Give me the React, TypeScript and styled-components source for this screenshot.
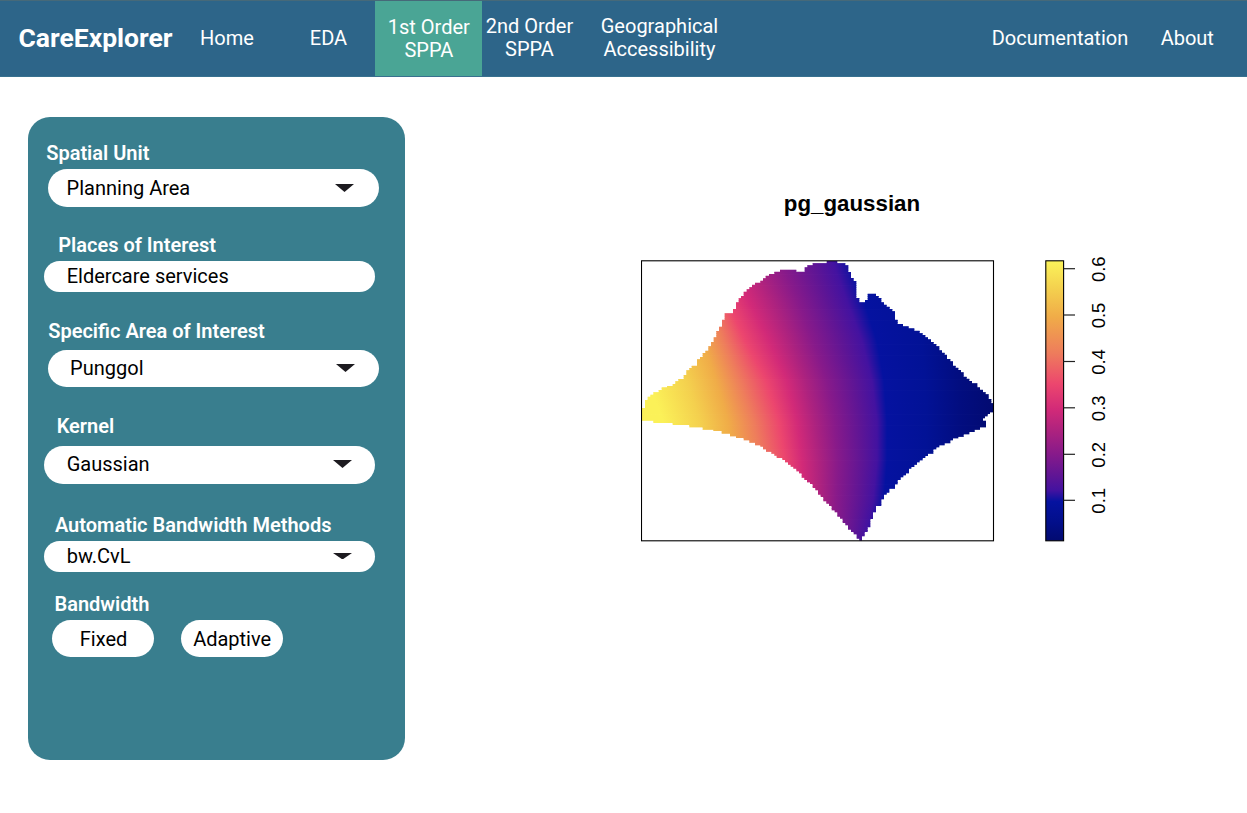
import React from 'react';
import styled, { createGlobalStyle } from 'styled-components';

const GlobalStyle = createGlobalStyle`
  * { box-sizing: border-box; }
  body { margin: 0; background: #fff; font-family: Roboto, sans-serif; }
`;

const Page = styled.div`
  min-height: 813px;
  width: 1247px;
`;

const NavBar = styled.nav`
  display: flex;
  height: 77px;
  background: #2d6589;
  border-top: 1px solid #466979;
  border-bottom: 1px solid #38718f;
  color: #fff;
`;

const Brand = styled.div`
  width: 154px;
  margin-left: 18.5px;
  font-size: 26.5px;
  font-weight: 700;
  line-height: 74px;
  white-space: nowrap;
`;

const NavItem = styled.a<{ $width: number; $gap?: number; $active?: boolean; $lift?: number }>`
  display: flex;
  flex: none;
  align-items: center;
  justify-content: center;
  width: ${p => p.$width}px;
  margin-left: ${p => p.$gap ?? 0}px;
  padding-top: ${p => (p.$active ? 1.6 : 0)}px;
  padding-bottom: ${p => p.$lift ?? 0}px;
  background: ${p => (p.$active ? '#4aa595' : 'transparent')};
  font-size: 20px;
  line-height: 23px;
  text-align: center;
  white-space: pre-line;
`;

const Content = styled.main`
  display: flex;
  padding: 39.7px 0 0 27.5px;
`;

const Panel = styled.aside`
  width: 377px;
  height: 643px;
  padding: 24.3px 0 0 16.7px;
  border-radius: 22px;
  background: #397e8e;
`;

const Field = styled.div<{ $before?: number }>`
  margin-top: ${p => p.$before ?? 0}px;
`;

const Label = styled.div<{ $indent: number; $gap: number }>`
  height: 24px;
  margin: 0 0 ${p => p.$gap}px ${p => p.$indent}px;
  color: #fff;
  font-size: 20px;
  font-weight: 600;
  line-height: 24px;
  white-space: nowrap;
`;

const Select = styled.div<{ $indent?: number; $short?: boolean; $text?: number; $end?: number; $lift?: number }>`
  display: flex;
  align-items: center;
  justify-content: space-between;
  width: 331.3px;
  height: ${p => (p.$short ? 30.5 : 37.3)}px;
  margin-left: ${p => p.$indent ?? 0}px;
  padding: 0 ${p => p.$end ?? 23.5}px ${p => p.$lift ?? 0}px ${p => p.$text ?? 22.5}px;
  border-radius: 19px;
  background: #fff;
  color: #000;
  font-size: 20px;
  line-height: 24px;
`;

const Buttons = styled.div`
  display: flex;
  gap: 27px;
  margin-left: 7.5px;
`;

const Toggle = styled.button<{ $nudge?: number }>`
  width: 102.3px;
  height: 37.3px;
  padding: 0 0 0 ${p => p.$nudge ?? 0}px;
  border: 0;
  border-radius: 19px;
  background: #fff;
  color: #000;
  font: 400 20px/24px Roboto, sans-serif;
`;

const Figure = styled.figure`
  width: 500px;
  margin: 73.3px 0 0 236.5px;
`;

const FigureTitle = styled.figcaption`
  width: 422px;
  height: 60px;
  color: #000;
  font: 700 22.3px/28px "Liberation Sans", Arial, sans-serif;
  text-align: center;
`;

const Drawing = styled.svg`
  display: block;
`;

const Arrow = ({ h = 8 }: { h?: number }) => (
  <Drawing width="19" height={h} viewBox="0 0 19 8" preserveAspectRatio="none">
    <path d="M0 0H19L9.5 8Z" fill="#1d1b20" />
  </Drawing>
);

type Step = [number, number];

// Upper edge of the study area in thirds of a pixel: [x where the step starts, y].
const TOP: Step[] = [
  [36, 474], [45, 450], [53, 440], [61, 434], [70, 427], [86, 420], [95, 412], [111, 408], [128, 402],
  [136, 394], [145, 387], [161, 375], [169, 361], [178, 354], [185, 347], [201, 328], [210, 321],
  [218, 309], [226, 302], [235, 289], [243, 276], [251, 262], [259, 243], [267, 230], [276, 209],
  [284, 190], [309, 177], [318, 157], [326, 145], [333, 138], [341, 125], [350, 118], [358, 112],
  [366, 104], [375, 98], [391, 92], [399, 85], [407, 77], [417, 72], [433, 65], [450, 59], [499, 65],
  [524, 52], [532, 46], [548, 40], [590, 33], [622, 40], [646, 46], [655, 66], [663, 84], [671, 93],
  [679, 144], [688, 157], [705, 150], [713, 131], [738, 138], [746, 144], [754, 157], [762, 164],
  [770, 170], [779, 177], [787, 184], [795, 209], [803, 222], [819, 229], [836, 235], [853, 242],
  [869, 250], [878, 255], [886, 262], [894, 268], [903, 276], [911, 282], [919, 289], [928, 301],
  [936, 308], [944, 314], [951, 327], [961, 334], [969, 347], [977, 353], [985, 360], [993, 367],
  [1001, 380], [1010, 386], [1018, 393], [1026, 400], [1042, 412], [1050, 419], [1059, 427],
  [1067, 433], [1076, 447], [1084, 450],
];

const BOTTOM: Step[] = [
  [36, 512], [70, 519], [128, 525], [178, 532], [218, 539], [250, 543], [275, 551], [300, 559],
  [318, 564], [341, 571], [358, 578], [375, 586], [391, 590], [399, 598], [408, 605], [424, 611],
  [433, 617], [440, 624], [457, 630], [465, 637], [474, 644], [482, 650], [490, 656], [499, 664],
  [507, 670], [515, 683], [523, 690], [531, 697], [540, 702], [548, 714], [556, 721], [564, 734],
  [572, 741], [580, 754], [589, 761], [597, 768], [605, 781], [614, 787], [622, 800], [630, 806],
  [638, 819], [646, 826], [654, 839], [663, 846], [671, 853], [680, 866], [688, 872], [696, 859],
  [704, 846], [713, 832], [721, 807], [729, 787], [738, 768], [754, 748], [762, 734], [770, 728],
  [778, 716], [795, 703], [803, 690], [812, 682], [820, 676], [828, 670], [837, 656], [844, 651],
  [853, 644], [861, 637], [869, 631], [878, 624], [886, 618], [894, 611], [910, 598], [919, 592],
  [928, 586], [944, 580], [961, 571], [969, 565], [985, 560], [1001, 553], [1018, 546], [1034, 539],
  [1050, 532],
];

// Eastern tip with its small inlet, between the upper and the lower edge.
const TIP: Step[] = [
  [1090, 460], [1080, 487], [1073, 492], [1065, 499], [1059, 505], [1068, 512],
];

const px = (x: number) => (x / 3 - 11).toFixed(2);
const py = (y: number) => (y / 3).toFixed(2);

const outline = (() => {
  let d = `M${px(36)} ${py(474)}`;
  TOP.forEach(([x, y]) => { d += `H${px(x)}V${py(y)}`; });
  TIP.forEach(([x, y]) => { d += `V${py(y)}H${px(x)}`; });
  d += `V${py(532)}`;
  for (let i = BOTTOM.length - 1; i >= 0; i--) {
    d += `V${py(BOTTOM[i][1])}H${px(BOTTOM[i][0])}`;
  }
  return d + 'Z';
})();

// Contours of equal density: x at eight heights, from the top edge to the bottom one.
const CONTOUR_Y = [0, 39, 79, 119, 159, 199, 239, 279];
const CONTOURS: { color: string; x: number[] }[] = [
  { color: '#fbf158', x: [-30, -20, -5, 8, 22, 22, 22, 22] },
  { color: '#f4d04e', x: [10, 20, 32, 46, 59, 61, 62, 62] },
  { color: '#f0ac48', x: [40, 50, 62, 75, 87, 92, 93, 93] },
  { color: '#ee7c5c', x: [58, 70, 83, 99, 113, 120, 122, 122] },
  { color: '#ec466e', x: [74, 86, 104, 125, 138, 144, 146, 146] },
  { color: '#d22a78', x: [90, 108, 128, 146, 156, 161, 163, 163] },
  { color: '#ac227f', x: [113, 133, 150, 165, 174, 179, 180, 180] },
  { color: '#871a8a', x: [140, 157, 172, 186, 194, 197, 196, 195] },
  { color: '#5e1595', x: [172, 186, 201, 213, 219, 221, 218, 212] },
  { color: '#4312a0', x: [192, 206, 221, 231, 236, 236, 232, 223] },
  { color: '#0512a0', x: [211, 223, 236, 243, 246, 246, 243, 235] },
  { color: '#021296', x: [270, 276, 281, 284, 285, 285, 282, 278] },
  { color: '#020d80', x: [310, 313, 316, 318, 319, 319, 318, 316] },
  { color: '#020a70', x: [354, 354, 354, 354, 354, 354, 354, 354] },
];

const contourAt = (xs: number[], y: number) => {
  const i = Math.min(6, CONTOUR_Y.findIndex((_, k) => k === 7 || CONTOUR_Y[k + 1] > y));
  const t = (y - CONTOUR_Y[i]) / (CONTOUR_Y[i + 1] - CONTOUR_Y[i]);
  return xs[i] + (xs[i + 1] - xs[i]) * t;
};

const CELL = 280 / 128;
const ROWS = Array.from({ length: 128 }, (_, i) => i);

const TICKS: [string, number][] = [
  ['0.6', 8.7], ['0.5', 55], ['0.4', 101.5], ['0.3', 147.8], ['0.2', 194.3], ['0.1', 240.3],
];

const DensityPlot = () => (
  <Drawing width="500" height="310" viewBox="0 -10 500 310">
    <defs>
      <clipPath id="area"><path d={outline} transform="translate(0 -10)" /></clipPath>
      {ROWS.map(r => (
        <linearGradient key={r} id={`row${r}`} gradientUnits="userSpaceOnUse" x1="-30" x2="370" y1="0" y2="0">
          {CONTOURS.map(c => (
            <stop key={c.color} offset={(contourAt(c.x, r * CELL) + 30) / 400} stopColor={c.color} />
          ))}
        </linearGradient>
      ))}
      <linearGradient id="scale" x1="0" x2="0" y1="0" y2="1">
        <stop offset="0" stopColor="#fbf35a" />
        <stop offset="0.1" stopColor="#f4d04e" />
        <stop offset="0.2" stopColor="#f0ac48" />
        <stop offset="0.33" stopColor="#ee7c5c" />
        <stop offset="0.44" stopColor="#ec466e" />
        <stop offset="0.53" stopColor="#d22a78" />
        <stop offset="0.61" stopColor="#ac227f" />
        <stop offset="0.69" stopColor="#871a8a" />
        <stop offset="0.77" stopColor="#5e1595" />
        <stop offset="0.82" stopColor="#4312a0" />
        <stop offset="0.86" stopColor="#0512a0" />
        <stop offset="0.93" stopColor="#020f8c" />
        <stop offset="1" stopColor="#020a70" />
      </linearGradient>
    </defs>
    <g clipPath="url(#area)">
      {ROWS.map(r => (
        <rect key={r} x="0" y={1 + r * CELL} width="354" height={CELL + 0.8} fill={`url(#row${r})`} />
      ))}
    </g>
    <rect x="0.5" y="0.8" width="352" height="280" fill="none" stroke="#000" strokeWidth="1.1" />
    <rect x="404.8" y="0.8" width="17.8" height="280" fill="url(#scale)" stroke="#000" strokeWidth="1.1" />
    {TICKS.map(([t, y]) => (
      <g key={t}>
        <path d={`M422.5 ${y}H434`} stroke="#222" strokeWidth="1.2" />
        <text
          transform={`translate(463.5 ${y + 0.5}) rotate(-90)`}
          textAnchor="middle"
          fontFamily="Liberation Sans, Arial, sans-serif"
          fontSize="18.5"
        >
          {t}
        </text>
      </g>
    ))}
  </Drawing>
);

export default function App() {
  return (
    <Page>
      <GlobalStyle />
      <NavBar>
        <Brand>CareExplorer</Brand>
        <NavItem $width={80} $gap={14.5}>Home</NavItem>
        <NavItem $width={60} $gap={31.5}>EDA</NavItem>
        <NavItem $width={107} $gap={16.8} $active>{'1st Order\nSPPA'}</NavItem>
        <NavItem $width={92} $gap={1.2} $lift={1.2}>{'2nd Order\nSPPA'}</NavItem>
        <NavItem $width={130} $gap={19} $lift={1.2}>{'Geographical\nAccessibility'}</NavItem>
        <NavItem $width={150} $gap={260.5}>Documentation</NavItem>
        <NavItem $width={70} $gap={17.3}>About</NavItem>
      </NavBar>
      <Content>
        <Panel>
          <Field>
            <Label $indent={2} $gap={4.3}>Spatial Unit</Label>
            <Select $indent={3.4} $text={19} $end={25}>Planning Area<Arrow /></Select>
          </Field>
          <Field $before={26.4}>
            <Label $indent={14} $gap={4.3}>Places of Interest</Label>
            <Select $short $lift={0.6}>Eldercare services</Select>
          </Field>
          <Field $before={27.4}>
            <Label $indent={4} $gap={6.8}>Specific Area of Interest</Label>
            <Select $indent={3.4} $text={22.5} $lift={1.6}>Punggol<Arrow /></Select>
          </Field>
          <Field $before={26.7}>
            <Label $indent={12.5} $gap={8.3}>Kernel</Label>
            <Select $lift={1.6}>Gaussian<Arrow /></Select>
          </Field>
          <Field $before={29.4}>
            <Label $indent={10.7} $gap={4.3}>Automatic Bandwidth Methods</Label>
            <Select $short $lift={0.6}>bw.CvL<Arrow h={6.5} /></Select>
          </Field>
          <Field $before={20.2}>
            <Label $indent={10.3} $gap={4}>Bandwidth</Label>
            <Buttons>
              <Toggle $nudge={1.4}>Fixed</Toggle>
              <Toggle>Adaptive</Toggle>
            </Buttons>
          </Field>
        </Panel>
        <Figure>
          <FigureTitle>pg_gaussian</FigureTitle>
          <DensityPlot />
        </Figure>
      </Content>
    </Page>
  );
}
